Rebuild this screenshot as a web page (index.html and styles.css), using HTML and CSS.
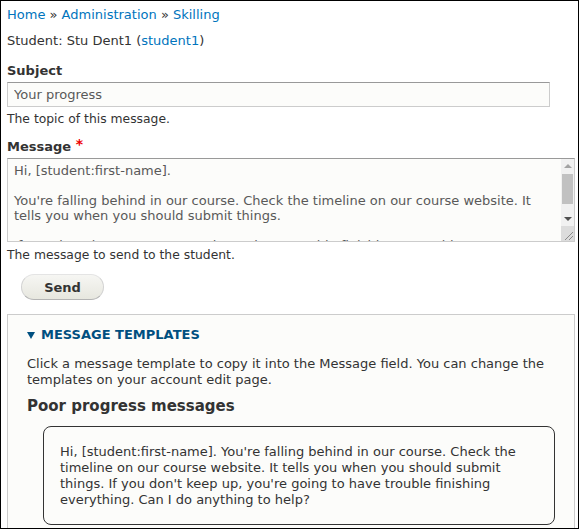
FILE: index.html
```html
<!DOCTYPE html>
<html lang="en">
<head>
<meta charset="utf-8">
<title>Skilling - message</title>
<link rel="stylesheet" href="styles.css">
</head>
<body>
<div class="page">
  <nav class="breadcrumb"><a href="#">Home</a> » <a href="#">Administration</a> » <a href="#">Skilling</a></nav>
  <p class="student">Student: Stu Dent1 (<a href="#">student1</a>)</p>
  <form class="form">
    <div class="field">
      <label class="label" for="subject">Subject</label>
      <input class="text-input" id="subject" type="text" value="Your progress">
      <div class="description">The topic of this message.</div>
    </div>
    <div class="field field-message">
      <label class="label" for="message">Message <span class="required">*</span></label>
      <div class="textarea-wrap">
        <textarea class="textarea" id="message">Hi, [student:first-name].

You're falling behind in our course. Check the timeline on our course website. It tells you when you should submit things.

If you don't keep up, you're going to have trouble finishing everything.

Can I do anything to help?</textarea>
        <div class="scrollbar" aria-hidden="true">
          <span class="sb-btn"><span class="sb-arrow-up"></span></span>
          <span class="sb-track"><span class="sb-thumb"></span></span>
          <span class="sb-btn"><span class="sb-arrow-down"></span></span>
          <span class="sb-corner">
            <svg width="13" height="15" viewBox="0 0 13 15"><path d="M4 14 L12 6 M8 14 L12 10" stroke="#8a8a8a" stroke-width="1" fill="none"/></svg>
          </span>
        </div>
      </div>
      <div class="description">The message to send to the student.</div>
    </div>
    <div class="actions">
      <button class="button" type="button">Send</button>
    </div>
    <details class="templates" open>
      <summary class="templates-summary">Message templates</summary>
      <p class="templates-intro">Click a message template to copy it into the Message field. You can change the templates on your account edit page.</p>
      <h3 class="templates-heading">Poor progress messages</h3>
      <div class="template">Hi, [student:first-name]. You're falling behind in our course. Check the timeline on our course website. It tells you when you should submit things. If you don't keep up, you're going to have trouble finishing everything. Can I do anything to help?</div>
    </details>
  </form>
</div>
</body>
</html>
```

FILE: styles.css
```css
html, body {
  margin: 0;
  padding: 0;
  background: #fff;
}

body {
  font-family: "DejaVu Sans", "Liberation Sans", sans-serif;
  font-size: 13px;
  color: #333;
}

a {
  color: #0074bd;
  text-decoration: none;
}

.page {
  box-sizing: border-box;
  height: 529px;
  border: 1px solid #000;
  overflow: hidden;
  padding: 4px 3px 0 6px;
}

.breadcrumb {
  line-height: 20px;
}

.student {
  margin: 6px 0 0;
  line-height: 20px;
}

.form {
  margin: 0;
}

.field {
  margin-top: 12px;
}

.field-message {
  margin-top: 11px;
}

.label {
  display: block;
  font-weight: bold;
  line-height: 16px;
  margin-bottom: 3px;
}

.required {
  color: #e00;
  font-size: 14px;
  position: relative;
  top: -2px;
}

.text-input {
  display: block;
  box-sizing: border-box;
  width: 543px;
  height: 25px;
  margin: 0;
  padding: 0 6px;
  font: 13px "DejaVu Sans", sans-serif;
  color: #595959;
  background: #fcfcfa;
  border: 1px solid #ccc;
  border-top-color: #999;
}

.textarea-wrap {
  position: relative;
  width: 568px;
  height: 84px;
}

.textarea {
  display: block;
  box-sizing: border-box;
  width: 568px;
  height: 84px;
  margin: 0;
  padding: 4px 21px 4px 6px;
  font: 13px "DejaVu Sans", sans-serif;
  color: #595959;
  background: #fcfcfa;
  border: 1px solid #ccc;
  border-top-color: #999;
  overflow: hidden;
  resize: none;
}

.scrollbar {
  position: absolute;
  top: 1px;
  right: 1px;
  bottom: 1px;
  width: 13px;
  display: flex;
  flex-direction: column;
  background: #f1f1f1;
}

.sb-btn {
  height: 14px;
  display: flex;
  align-items: center;
  justify-content: center;
}

.sb-arrow-up {
  width: 0;
  height: 0;
  border-left: 4px solid transparent;
  border-right: 4px solid transparent;
  border-bottom: 4px solid #a3a3a3;
}

.sb-arrow-down {
  width: 0;
  height: 0;
  border-left: 4px solid transparent;
  border-right: 4px solid transparent;
  border-top: 4px solid #505050;
}

.sb-track {
  flex: 1;
  padding: 1px 1px 0;
}

.sb-thumb {
  display: block;
  height: 30px;
  background: #c1c1c1;
}

.sb-corner {
  height: 15px;
  background: #dcdcdc;
}

.sb-corner svg {
  display: block;
}

.description {
  margin-top: 4px;
  line-height: 16px;
  font-size: 12.35px;
}

.field-message .description {
  margin-top: 5px;
}

.actions {
  margin-top: 11px;
  padding-left: 14px;
}

.button {
  box-sizing: border-box;
  width: 83px;
  height: 26px;
  padding: 0;
  font: bold 13px "DejaVu Sans", sans-serif;
  color: #333;
  background: linear-gradient(#f6f6f3, #e7e7df);
  border: 1px solid #d2d2d2;
  border-top-color: #e4e4e4;
  border-bottom-color: #b4b4b4;
  border-radius: 20px;
}

.templates {
  margin-top: 14px;
  width: 568px;
  box-sizing: border-box;
  border: 1px solid #ccc;
  background: #fcfcfa;
  padding: 10px 19px 20px;
}

.templates-summary {
  list-style: none;
  display: flex;
  align-items: center;
  gap: 6px;
  line-height: 20px;
  font-weight: bold;
  text-transform: uppercase;
  color: #004f80;
  cursor: pointer;
}

.templates-summary::-webkit-details-marker {
  display: none;
}

.templates-summary::before {
  content: "";
  width: 0;
  height: 0;
  border-left: 4px solid transparent;
  border-right: 4px solid transparent;
  border-top: 7px solid #004f80;
}

.templates-intro {
  margin: 11px 0 0;
  line-height: 16px;
}

.templates-heading {
  margin: 8px 0 0;
  font-size: 15px;
  line-height: 20px;
  font-weight: bold;
}

.template {
  margin: 10px 0 0 16px;
  padding: 17px 16px 16px;
  border: 1px solid #333;
  border-radius: 8px;
  line-height: 16px;
}
```
